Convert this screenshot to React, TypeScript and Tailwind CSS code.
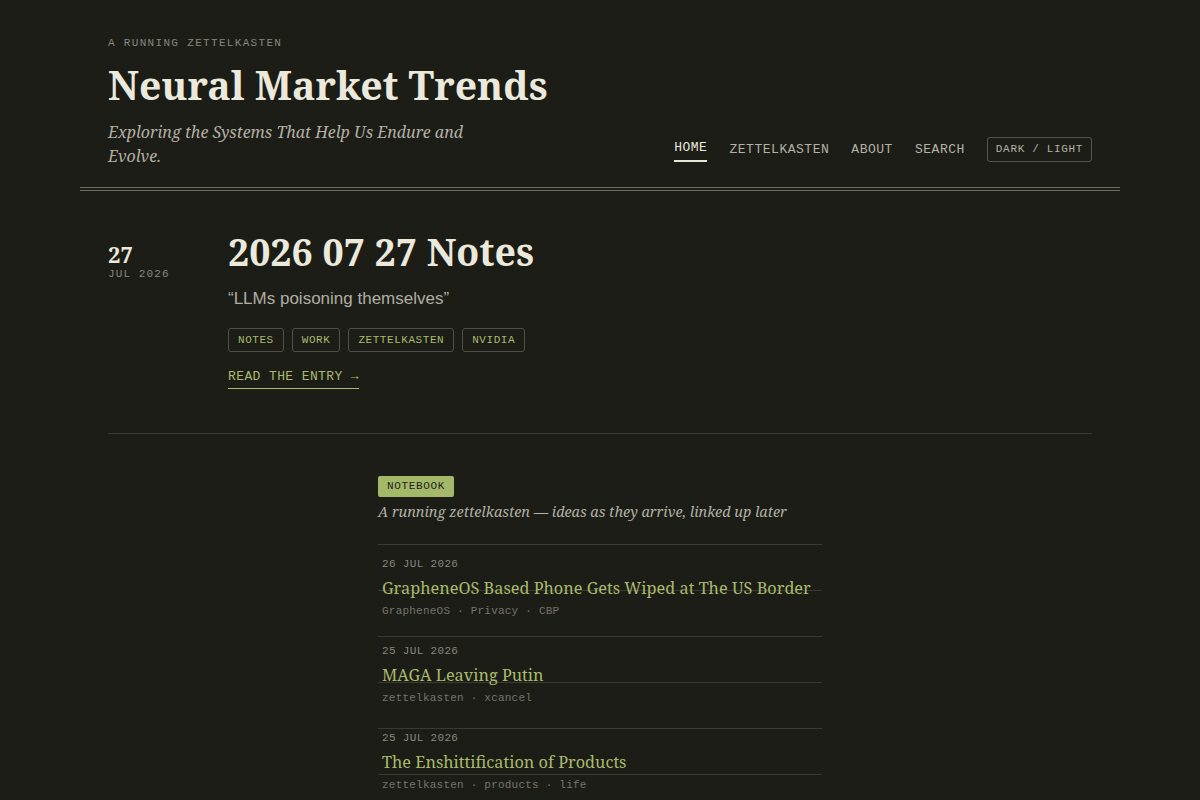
import React from "react";

const serif = "font-['Noto_Serif','DejaVu_Serif',serif]";
const mono = "font-['Liberation_Mono','DejaVu_Sans_Mono',monospace]";

const items = [
  { date: "26 JUL 2026", title: "GrapheneOS Based Phone Gets Wiped at The US Border", tags: ["GrapheneOS", "Privacy", "CBP"] },
  { date: "25 JUL 2026", title: "MAGA Leaving Putin", tags: ["zettelkasten", "xcancel"] },
  { date: "25 JUL 2026", title: "The Enshittification of Products", tags: ["zettelkasten", "products", "life"] },
];

export default function App() {
  return (
    <div className="min-h-screen w-full bg-[#1d1d18] text-[#e8e6d9]">
      <div className="mx-auto w-[1040px]">
        <header className="flex items-end justify-between px-7 pt-[36px]">
          <div>
            <div className={`${mono} text-[11px] leading-[14px] tracking-[0.12em] text-[#87877d]`}>A RUNNING ZETTELKASTEN</div>
            <h1 className={`${serif} mt-[9px] text-[39.2px] font-bold leading-[52px] text-[#ebe9dc]`}>Neural Market Trends</h1>
            <p className={`${serif} mt-[9px] max-w-[400px] text-[16px] italic leading-[24px] text-[#b3b1a4]`}>
              Exploring the Systems That Help Us Endure and Evolve.
            </p>
          </div>
          <nav className={`${mono} mb-[6px] flex items-center gap-[22px] text-[13px] leading-[16px] tracking-[0.04em]`}>
            <a className="mt-[2px] border-b-2 border-[#e8e6d9] pb-[4px] text-[#ebe9dc]">HOME</a>
            <a className="text-[#b3b1a4]">ZETTELKASTEN</a>
            <a className="text-[#b3b1a4]">ABOUT</a>
            <a className="text-[#b3b1a4]">SEARCH</a>
            <button className="rounded-[3px] border border-[#55554b] px-[8px] py-[4px] text-[11px] leading-[15px] tracking-[0.06em] text-[#b3b1a4]">DARK / LIGHT</button>
          </nav>
        </header>
        <div className="mt-[19px] h-[4px] border-y border-[#6e6e63]" />

        <section className="mx-7 flex border-b border-[#3a3a33] pb-[44px] pt-[37px]">
          <div className="w-[120px] pt-[14px]">
            <div className={`${serif} text-[22px] font-bold leading-[24px] text-[#ebe9dc]`}>27</div>
            <div className={`${mono} mt-[1px] text-[11px] leading-[14px] tracking-[0.1em] text-[#87877d]`}>JUL 2026</div>
          </div>
          <div className="flex-1">
            <h2 className={`${serif} text-[37.5px] font-bold leading-[48px] text-[#ebe9dc]`}>2026 07 27 Notes</h2>
            <p className="mt-[11px] font-['Liberation_Sans',Arial,sans-serif] text-[17px] leading-[24px] text-[#b0aea2]">“LLMs poisoning themselves”</p>
            <div className="mt-[17px] flex gap-[8px]">
              {["NOTES", "WORK", "ZETTELKASTEN", "NVIDIA"].map((t) => (
                <span key={t} className={`${mono} rounded-[3px] border border-[#4f4f46] px-[9px] py-[4px] text-[11px] leading-[14px] tracking-[0.05em] text-[#a8bb6c]`}>{t}</span>
              ))}
            </div>
            <div className="mt-[16px] flex">
              <a className={`${mono} border-b border-[#a8bb6c] pb-[2px] text-[13px] leading-[18px] tracking-[0.03em] text-[#a8bb6c]`}>READ THE ENTRY →</a>
            </div>
          </div>
        </section>

        <section className="mx-auto mt-[42px] w-[444px]">
          <div className="flex">
            <span className={`${mono} rounded-[2px] bg-[#a4b86a] px-[9px] py-[3px] text-[11px] leading-[15px] tracking-[0.06em] text-[#1d1d18]`}>NOTEBOOK</span>
          </div>
          <p className={`${serif} mt-[4px] text-[14.4px] italic leading-[22px] text-[#b3b1a4]`}>A running zettelkasten — ideas as they arrive, linked up later</p>
          <div className="mt-[21px] bg-[repeating-linear-gradient(to_bottom,#3a3a33_0px,#3a3a33_1px,transparent_1px,transparent_46px)]">
            {items.map((it, i) => (
              <div key={i} className="h-[87px] px-1 pt-[13px]">
                <div className={`${mono} text-[11px] leading-[14px] tracking-[0.03em] text-[#87877d]`}>{it.date}</div>
                <div className={`${serif} mt-[5px] whitespace-nowrap text-[16.3px] leading-[24px] text-[#a8bb6c]`}>{it.title}</div>
                <div className={`${mono} mt-[3px] text-[11px] leading-[16px] tracking-[0.02em] text-[#75756b]`}>{it.tags.join(" · ")}</div>
              </div>
            ))}
          </div>
        </section>
      </div>
    </div>
  );
}
